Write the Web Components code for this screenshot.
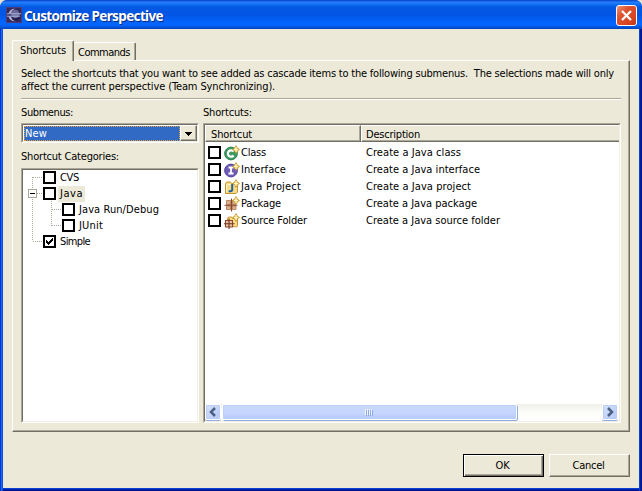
<!DOCTYPE html>
<html lang="en"><head><meta charset="utf-8"><title>Customize Perspective</title>
<style>html,body{margin:0;width:642px;height:491px;overflow:hidden;background:#e5e1d3}
body{font:11px/14px "DejaVu Sans Condensed","DejaVu Sans",sans-serif;font-stretch:condensed;color:#000}</style></head>
<body><perspective-dialog></perspective-dialog>
<script>
const define=(name,css,html,ready)=>customElements.define(name,class extends HTMLElement{
  connectedCallback(){
    if(this.shadowRoot)return;
    const r=this.attachShadow({mode:'open'});
    const t=document.createElement('template');
    t.innerHTML='<style>:host{display:block;box-sizing:border-box}*{box-sizing:border-box}'+css+'</style>'+html;
    r.append(t.content.cloneNode(true));
    if(ready)ready(this,r);
  }
});

/* A single line of text spread to a given width */
define('fit-text',':host{display:block;white-space:pre;height:14px}span{display:inline-block}','<span><slot></slot></span>',(h,r)=>{
  const s=r.querySelector('span'),w=+h.getAttribute('w');
  s.style.letterSpacing=(w-s.getBoundingClientRect().width)/h.textContent.length+'px';
});

define('check-box',':host{width:13px;height:13px;border:2px solid #000;background:#fff;flex:none}svg{display:none}:host([checked]) svg{display:block}',
 '<svg width="9" height="9" shape-rendering="crispEdges"><path d="M1 3h1v1h1v1h1v-1h1v-1h1v-1h1v-1h1v3h-1v1h-1v1h-1v1h-1v1h-1v-1h-1v-1h-1z"/></svg>');

const star='<path d="M12 0 13.700 2.800 16 4.500 13.700 6.200 12 9 10.300 6.200 8 4.500 10.300 2.800z" fill="#c8982c"/><path d="M12 2v5M9.800 4.500h4.400" stroke="#fff6c0" stroke-width="1.400"/>';
const folder='<path d="M1.500 14.500v-10l1-1.500h4l1 1.500h6v8.500l-1.500 1.500z" fill="#fbdc84" stroke="#c8922f"/><path d="M2.500 13v-7.500h5" fill="none" stroke="#fff4c8"/>';
const icons={
 class:'<circle cx="7" cy="8.500" r="6.400" fill="#3f9a62" stroke="#2f8452"/><path d="M9.600 6.500A3.200 3.200 0 1 0 9.600 10.500" fill="none" stroke="#fff" stroke-width="2.200"/>'+star,
 interface:'<circle cx="7" cy="8.500" r="6.400" fill="#6d5bb5" stroke="#56469c"/><path d="M4.500 5.500h5M4.500 11.500h5M7 5v7" stroke="#fff" stroke-width="1.800"/>'+star,
 project:folder+'<path d="M8.200 5v5.500q0 1.700-1.700 1.700H4.700" fill="none" stroke="#1c64a4" stroke-width="2"/>'+star,
 package:'<path d="M2 4h10v10H2z" fill="#e2bd98"/><path d="M2.500 4.500h4v4h-4zM8.500 4.500h3v4h-3zM2.500 10h4v3.500h-4zM8.500 10h3.500v3.500h-3.500z" fill="#dcb189" stroke="#b98562" stroke-width=".9"/><path d="M7.500 2.500v13M.5 9.300h13" stroke="#84462f" stroke-width="1.100"/>'+star,
 source:'<path d="M3.500 12.500v-7l1-1.500h3l1 1.500h5v7.500l-1 1z" fill="#fbdc84" stroke="#c8922f"/>'+
  '<path d="M1.500 7.500h7v6.500h-7z" fill="#e7c6a2" stroke="#8a4b36" stroke-width="1.100"/><path d="M5 5.500v10.500M-.5 10.700h11" stroke="#74331f" stroke-width="1.100"/>'+star};
define('java-icon',':host{width:16px;height:16px;flex:none}svg{display:block}','<svg width="16" height="16" viewBox="0 0 16 16"></svg>',(h,r)=>r.querySelector('svg').innerHTML=icons[h.getAttribute('kind')]);

define('title-bar',`:host{height:29px;padding:6px 6px 0 6px;display:flex;border-radius:7px 7px 0 0;
 background:linear-gradient(#0a50d2 0,#0a50d2 1px,#2a80fc 2px,#1472f5 4px,#0259e2 7px,#0355e3 15px,#0262f8 21px,#0567ff 25px,#0354dc 27px,#0243b8 29px)}
 .eclipse{width:16px;height:16px;margin-top:1px;flex:none}
 fit-text{margin:2px 0 0 2px;flex:1;color:#fff;font:bold 13.500px/17px "Noto Sans","Open Sans",sans-serif;text-shadow:1px 1px #08297c}
 .close{width:21px;height:21px;margin-top:-1px;border:1px solid #fff;border-radius:3px;background:linear-gradient(135deg,#ef9274,#dd522f 35%,#d94420 75%,#b53414);margin-right:-1px}`,
 `<svg class="eclipse" viewBox="0 0 16 16"><path d="M0 0h16v16H0z" fill="#4b3c78"/><path d="M1 1h14v14H1z" fill="#332a62"/><circle cx="9" cy="8" r="5.500" fill="#1f1a48"/><circle cx="9.300" cy="7" r="4.300" fill="#6c6a98"/><path d="M2.500 6.500Q4 1.500 9.500 1.800Q5.500 3 5 6.500zM2.500 9.500Q4 14.500 9.500 14.200Q5.500 13 5 9.500z" fill="#b9b8d2"/><path d="M1 6.800h14M1 9.200h13" stroke="#a9b6e2"/></svg>
 <fit-text w="139">Customize Perspective</fit-text>
 <svg class="close" viewBox="0 0 19 19"><path d="M5 5l9 9M14 5l-9 9" stroke="#fff" stroke-width="2.300"/></svg>`);

define('tab-item',`:host{height:18px;width:62px;padding:3px 0 0 4px;border-top:1px solid #fff;border-right:1px solid #716f64;box-shadow:inset -1px 0 #aca899;border-radius:2px 2px 0 0;background:#ece9d8}
 :host([active]){height:21px;width:62px;border-left:1px solid #fff;padding:3px 0 0 7px;margin-bottom:-1px;position:relative}`,'<slot></slot>');

define('sunken-box',':host{border:1px solid;border-color:#aca899 #fff #fff #aca899}div{height:100%;border:1px solid;border-color:#716f64 #f1efe2 #f1efe2 #716f64;background:#fff}','<div><slot></slot></div>');

define('combo-box',':host{height:20px}sunken-box{height:20px}.in{display:flex;height:16px;padding:1px 0 0 1px}.sel{width:156px;height:15px;background:#316ac5;color:#fff;outline:1px dotted #e8a040;outline-offset:-1px;padding:1px 0 0 1px}.btn{width:17px;height:16px;margin-top:-1px;background:#ece9d8;border:1px solid;border-color:#fff #716f64 #716f64 #fff;box-shadow:inset -1px -1px #aca899}svg{display:block}',
 '<sunken-box><div class="in"><div class="sel"><slot></slot></div><div class="btn"><svg width="15" height="14" shape-rendering="crispEdges"><path d="M4 6h7v1h-1v1h-1v1h-1v1h-1v-1h-1v-1h-1v-1h-1z"/></svg></div></div></sunken-box>');

define('tree-row',':host{display:flex;height:16px;align-items:flex-start;padding-left:20px}:host([child]){padding-left:39px}check-box{margin-top:1px}.lab{margin-left:2px;padding:1px 2px 1px 2px;height:16px}:host([selected]) .lab{background:#ece9d8}',
 '<check-box></check-box><div class="lab"><slot></slot></div>',(h,r)=>{if(h.hasAttribute('checked'))r.querySelector('check-box').setAttribute('checked','')});

define('category-tree',':host{height:255px}sunken-box{height:100%}.rows{position:relative;padding-top:0}.lines{position:absolute;left:0;top:0}',
 `<sunken-box><div class="rows"><svg class="lines" width="60" height="90" shape-rendering="crispEdges"><g fill="none" stroke="#aca899" stroke-dasharray="1 1"><path d="M9.500 7v64M10 7.500h9M10 71.500h9M14 23.500h5M28.500 31v25M29 39.500h9M29 55.500h9"/></g><path d="M5.500 19.500h8v8h-8z" fill="#fff" stroke="#aca899"/><path d="M7 23.500h5" stroke="#000"/></svg>
 <tree-row><fit-text w="19">CVS</fit-text></tree-row><tree-row selected><fit-text w="23">Java</fit-text></tree-row><tree-row child><fit-text w="80">Java Run/Debug</fit-text></tree-row><tree-row child><fit-text w="24">JUnit</fit-text></tree-row><tree-row checked><fit-text w="30">Simple</fit-text></tree-row></div></sunken-box>`);

define('head-cell',':host{height:17px;padding:2px 0 0 5px;background:#ece9d8;border:1px solid;border-color:#fff #716f64 #716f64 #fff;box-shadow:inset -1px -1px #aca899}','<slot></slot>');

define('shortcut-row',':host{display:grid;grid-template-columns:13px 3px 16px 1px 125px 1fr;height:17px;padding-left:3px;align-items:start}check-box{margin-top:2px}.icon{grid-column:3;margin-top:1px}.name{grid-column:5}.name,.desc{margin-top:2px}',
 '<check-box></check-box><div class="icon"></div><div class="name"><slot name="name"></slot></div><div class="desc"><slot name="description"></slot></div>',(h,r)=>{
  const n=document.createElement('java-icon');n.setAttribute('kind',h.getAttribute('kind'));r.querySelector('.icon').append(n);
 });

define('scroll-bar',`:host{display:flex;height:17px;background:linear-gradient(#f0efe8,#fdfdfa 50%,#fefefc)}
 .b{width:16px;height:16px;border:1px solid #fff;border-radius:2px;background:linear-gradient(135deg,#d5e1fd,#b5c9f8);box-shadow:inset 0 0 0 1px #bccdf5,0 1px #92ade0;flex:none}
 .thumb{width:295px;margin-left:1px;height:16px;border:1px solid #fff;border-radius:2px;background:linear-gradient(#c9d8fd,#c5d5fd 60%,#b4c8f7);box-shadow:inset 0 0 0 1px #bccffb,1px 1px #91acdf;flex:none;display:flex;align-items:center;justify-content:center}
 .space{flex:1}svg{display:block}`,
 `<svg class="b" viewBox="0 0 14 14"><path d="M9 3 5 7l4 4" fill="none" stroke="#4d6185" stroke-width="2.500"/></svg><div class="thumb"><svg width="9" height="7" shape-rendering="crispEdges"><path d="M.5 0v6M2.500 0v6M4.500 0v6M6.500 0v6" stroke="#f0f5ff"/><path d="M1.500 1v6M3.500 1v6M5.500 1v6M7.500 1v6" stroke="#8caae6"/></svg></div><div class="space"></div><svg class="b" viewBox="0 0 14 14"><path d="M5 3l4 4-4 4" fill="none" stroke="#4d6185" stroke-width="2.500"/></svg>`);

const data=[['class','Class',25,'Create a Java class',95],['interface','Interface',45,'Create a Java interface',114],['project','Java Project',60,'Create a Java project',105],['package','Package',40,'Create a Java package',111],['source','Source Folder',66,'Create a Java source folder',134]];
define('shortcut-table',':host{height:300px}sunken-box{height:300px}.in{display:flex;flex-direction:column;height:296px}.head{display:grid;grid-template-columns:156px 1fr}.rows{flex:1;padding-top:2px}scroll-bar{margin-right:1px}',
 '<sunken-box><div class="in"><div class="head"><head-cell><fit-text w="41">Shortcut</fit-text></head-cell><head-cell style="padding-left:4px;border-right:0;box-shadow:inset 0 -1px #aca899"><fit-text w="54">Description</fit-text></head-cell></div><div class="rows">'+data.map(d=>`<shortcut-row kind="${d[0]}"><fit-text slot="name" w="${d[2]}">${d[1]}</fit-text><fit-text slot="description" w="${d[4]}">${d[3]}</fit-text></shortcut-row>`).join('')+'</div><scroll-bar></scroll-bar></div></sunken-box>');

define('push-button',':host{width:81px;height:23px;background:#ece9d8;border:1px solid;border-color:#fff #716f64 #716f64 #fff;box-shadow:inset -1px -1px #aca899;display:flex;align-items:center;justify-content:center;padding-right:2px}:host([primary]){border-color:#000;box-shadow:inset 1px 1px #fff,inset -1px -1px #716f64,inset -2px -2px #aca899}','<slot></slot>');

define('perspective-dialog',`:host{width:642px;height:491px;display:flex;flex-direction:column;border-radius:7px 7px 0 0;overflow:hidden;background:linear-gradient(90deg,#0831d9 0,#0831d9 1px,#166aee 1px,#166aee 2px,#0855dd 2px,#0855dd 3px,transparent 3px,transparent 639px,#0841d8 639px,#0841d8 640px,#001ea0 640px,#001ea0 641px,#00138c 641px),linear-gradient(#0841d8 488px,#0841d8 489px,#001ea0 489px,#001ea0 490px,#00138c 490px)}
 .body{margin:0 3px 3px;flex:1;background:#ece9d8;padding:11px 9px 0;display:flex;flex-direction:column}
 .tabs{display:flex;align-items:flex-end;height:20px}
 .panel{height:372px;width:618px;border:1px solid;border-color:#fff #716f64 #716f64 #fff;box-shadow:inset -1px -1px #aca899;padding:6px 8px}
 .desc{display:grid;grid-auto-rows:13px;height:31px}.rule{height:2px;border-top:1px solid #aca899;border-bottom:1px solid #fff;width:600px}
 .cols{display:grid;grid-template-columns:178px 418px;gap:4px;padding-top:6px}
 .cap{height:17px;display:block}.cap2{margin-top:7px;height:18px}
 .buttons{display:flex;justify-content:flex-end;gap:5px;margin-top:22px}`,
 `<title-bar></title-bar><div class="body"><div class="tabs"><tab-item active><fit-text w="46">Shortcuts</fit-text></tab-item><tab-item><fit-text w="52">Commands</fit-text></tab-item></div>
 <div class="panel"><div class="desc"><fit-text w="593">Select the shortcuts that you want to see added as cascade items to the following submenus.  The selections made will only</fit-text><fit-text w="254">affect the current perspective (Team Synchronizing).</fit-text></div><div class="rule"></div>
 <div class="cols"><div><fit-text class="cap" w="52">Submenus:</fit-text><combo-box><fit-text w="22">New</fit-text></combo-box><fit-text class="cap2" w="98">Shortcut Categories:</fit-text><category-tree></category-tree></div><div><fit-text class="cap" w="49">Shortcuts:</fit-text><shortcut-table></shortcut-table></div></div></div>
 <div class="buttons"><push-button primary><fit-text w="14">OK</fit-text></push-button><push-button><fit-text w="32">Cancel</fit-text></push-button></div></div>`);
</script></body></html>
